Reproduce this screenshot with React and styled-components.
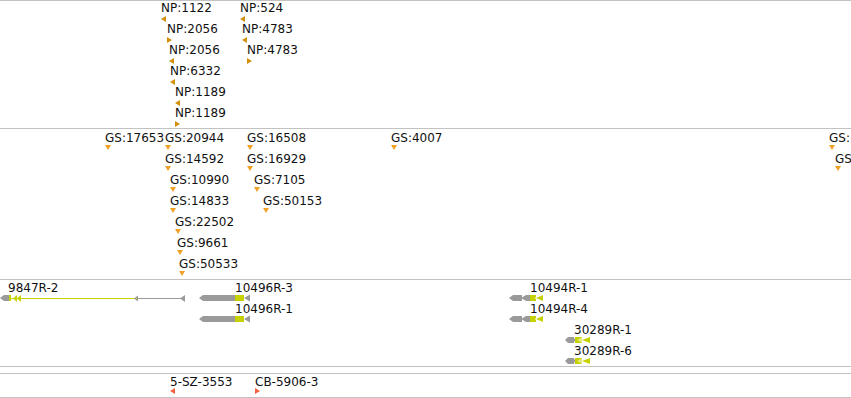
import React from 'react'
import styled, { createGlobalStyle } from 'styled-components'

const GlobalStyle = createGlobalStyle`
  html, body {
    margin: 0;
    padding: 0;
    background: #ffffff;
    overflow: hidden;
  }
  body {
    font-family: "DejaVu Sans", "Liberation Sans", sans-serif;
    color: #111;
  }
`

const Viewer = styled.div`
  width: 851px;
  display: flex;
  flex-direction: column;
`

const Track = styled.div`
  position: relative;
  height: ${p => p.$h}px;
  border-top: 1px solid #c2c2c2;
  border-bottom: ${p => (p.$last ? '1px solid #c2c2c2' : 'none')};
  overflow: hidden;
`

const Feature = styled.div`
  position: absolute;
  left: ${p => p.$x}px;
  top: ${p => p.$y}px;
  display: flex;
  flex-direction: column;
  align-items: flex-start;
`

const Label = styled.span`
  display: block;
  font-size: 12px;
  line-height: 14px;
  white-space: nowrap;
  margin-left: ${p => p.$indent || 0}px;
`

const Marker = styled.svg`
  display: block;
  margin-top: ${p => p.$gap || 0}px;
  flex: none;
`

const COLORS = {
  np: '#d48f0c',
  gs: '#f0a126',
  cb: '#f5603f',
  gray: '#9a9a9a',
  cds: '#c6d100',
}

const npFeatures = [
  { id: 'NP:1122', x: 161, row: 0, dir: 'l' },
  { id: 'NP:2056', x: 167, row: 1, dir: 'r' },
  { id: 'NP:2056', x: 169, row: 2, dir: 'l' },
  { id: 'NP:6332', x: 170, row: 3, dir: 'l' },
  { id: 'NP:1189', x: 175, row: 4, dir: 'l' },
  { id: 'NP:1189', x: 175, row: 5, dir: 'r' },
  { id: 'NP:524', x: 240, row: 0, dir: 'l' },
  { id: 'NP:4783', x: 242, row: 1, dir: 'l' },
  { id: 'NP:4783', x: 247, row: 2, dir: 'r' },
]

const gsFeatures = [
  { id: 'GS:17653', x: 105, row: 0 },
  { id: 'GS:20944', x: 165, row: 0 },
  { id: 'GS:14592', x: 165, row: 1 },
  { id: 'GS:10990', x: 170, row: 2 },
  { id: 'GS:14833', x: 170, row: 3 },
  { id: 'GS:22502', x: 175, row: 4 },
  { id: 'GS:9661', x: 177, row: 5 },
  { id: 'GS:50533', x: 179, row: 6 },
  { id: 'GS:16508', x: 247, row: 0 },
  { id: 'GS:16929', x: 247, row: 1 },
  { id: 'GS:7105', x: 254, row: 2 },
  { id: 'GS:50153', x: 263, row: 3 },
  { id: 'GS:4007', x: 391, row: 0 },
  { id: 'GS:13872', x: 829, row: 0 },
  { id: 'GS:21016', x: 835, row: 1 },
]

const genes = [
  { id: '9847R-2', x: 0, label: 8, row: 0, shape: 'long' },
  { id: '10496R-3', x: 199, label: 235, row: 0, shape: 'wide' },
  { id: '10496R-1', x: 199, label: 235, row: 1, shape: 'wide' },
  { id: '10494R-1', x: 509, label: 530, row: 0, shape: 'short' },
  { id: '10494R-4', x: 509, label: 530, row: 1, shape: 'short' },
  { id: '30289R-1', x: 565, label: 574, row: 2, shape: 'tiny' },
  { id: '30289R-6', x: 565, label: 574, row: 3, shape: 'tiny' },
]

const clones = [
  { id: '5-SZ-3553', x: 170, dir: 'l' },
  { id: 'CB-5906-3', x: 255, dir: 'r' },
]

function Strand({ dir, color, gap = 1 }) {
  return (
    <Marker width="5" height="6" viewBox="0 0 5 6" $gap={gap}>
      {dir === 'l'
        ? <polygon points="0,3 5,0 5,6" fill={color} />
        : <polygon points="0,0 5,3 0,6" fill={color} />}
    </Marker>
  )
}

function GeneGlyph({ shape }) {
  const g = COLORS.gray
  const y = COLORS.cds
  if (shape === 'long') {
    return (
      <Marker width="186" height="8" viewBox="0 0 186 8" $gap={-1}>
        <polygon points="0,4 4,1 9,1 9,7 4,7" fill={g} />
        <rect x="9" y="1" width="2" height="6" fill={y} />
        <rect x="11" y="4" width="124" height="1" fill={y} />
        <polygon points="13,4.5 17,1 17,8" fill={y} />
        <polygon points="17,4.5 21,1 21,8" fill={y} />
        <polygon points="134,4.5 138,1.5 138,7.5" fill={g} />
        <rect x="136" y="4" width="1" height="1" fill={y} />
        <rect x="138" y="4" width="44" height="1" fill={g} />
        <polygon points="180,4.5 185,1 185,8" fill={g} />
      </Marker>
    )
  }
  if (shape === 'wide') {
    return (
      <Marker width="52" height="8" viewBox="0 0 52 8" $gap={-1}>
        <polygon points="0,4 4,1 36,1 36,7 4,7" fill={g} />
        <rect x="36" y="1" width="9" height="6" fill={y} />
        <polygon points="45,4 51,0.5 51,7.5" fill={g} />
      </Marker>
    )
  }
  if (shape === 'short') {
    return (
      <Marker width="35" height="8" viewBox="0 0 35 8" $gap={-1}>
        <polygon points="0,4 4,1 13,1 13,7 4,7" fill={g} />
        <polygon points="12,4 17,1 21,1 21,7 17,7" fill={g} />
        <rect x="21" y="1" width="6" height="6" fill={y} />
        <polygon points="26,4 29,1 29,7" fill="#ffffff" />
        <polygon points="27,4 34,1 34,7" fill={y} />
      </Marker>
    )
  }
  return (
    <Marker width="26" height="8" viewBox="0 0 26 8" $gap={-1}>
      <polygon points="0,4 3,1 9,1 9,7 3,7" fill={g} />
      <polygon points="8,4 11,1 11,7" fill={g} />
      <rect x="10" y="1" width="7" height="6" fill={y} />
      <polygon points="12,4 17,1 17,7" fill="#ffffff" opacity="0.5" />
      <polygon points="17,4 25,1 25,7" fill={y} />
    </Marker>
  )
}

export default function App() {
  return (
    <>
      <GlobalStyle />
      <Viewer>
        <Track $h={127}>
          {npFeatures.map((f, i) => (
            <Feature key={i} $x={f.x} $y={f.row * 21}>
              <Label>{f.id}</Label>
              <Strand dir={f.dir} color={COLORS.np} />
            </Feature>
          ))}
        </Track>

        <Track $h={150}>
          {gsFeatures.map((f, i) => (
            <Feature key={i} $x={f.x} $y={2 + f.row * 21}>
              <Label>{f.id}</Label>
              <Marker width="6" height="5" viewBox="0 0 6 5">
                <polygon points="0,0 6,0 3,5" fill={COLORS.gs} />
              </Marker>
            </Feature>
          ))}
        </Track>

        <Track $h={86}>
          {genes.map((f, i) => (
            <Feature key={i} $x={f.x} $y={1 + f.row * 21}>
              <Label $indent={f.label - f.x}>{f.id}</Label>
              <GeneGlyph shape={f.shape} />
            </Feature>
          ))}
        </Track>

        <Track $h={6} />

        <Track $h={23} $last>
          {clones.map((f, i) => (
            <Feature key={i} $x={f.x} $y={1}>
              <Label>{f.id}</Label>
              <Strand dir={f.dir} color={COLORS.cb} gap={-1} />
            </Feature>
          ))}
        </Track>
      </Viewer>
    </>
  )
}
